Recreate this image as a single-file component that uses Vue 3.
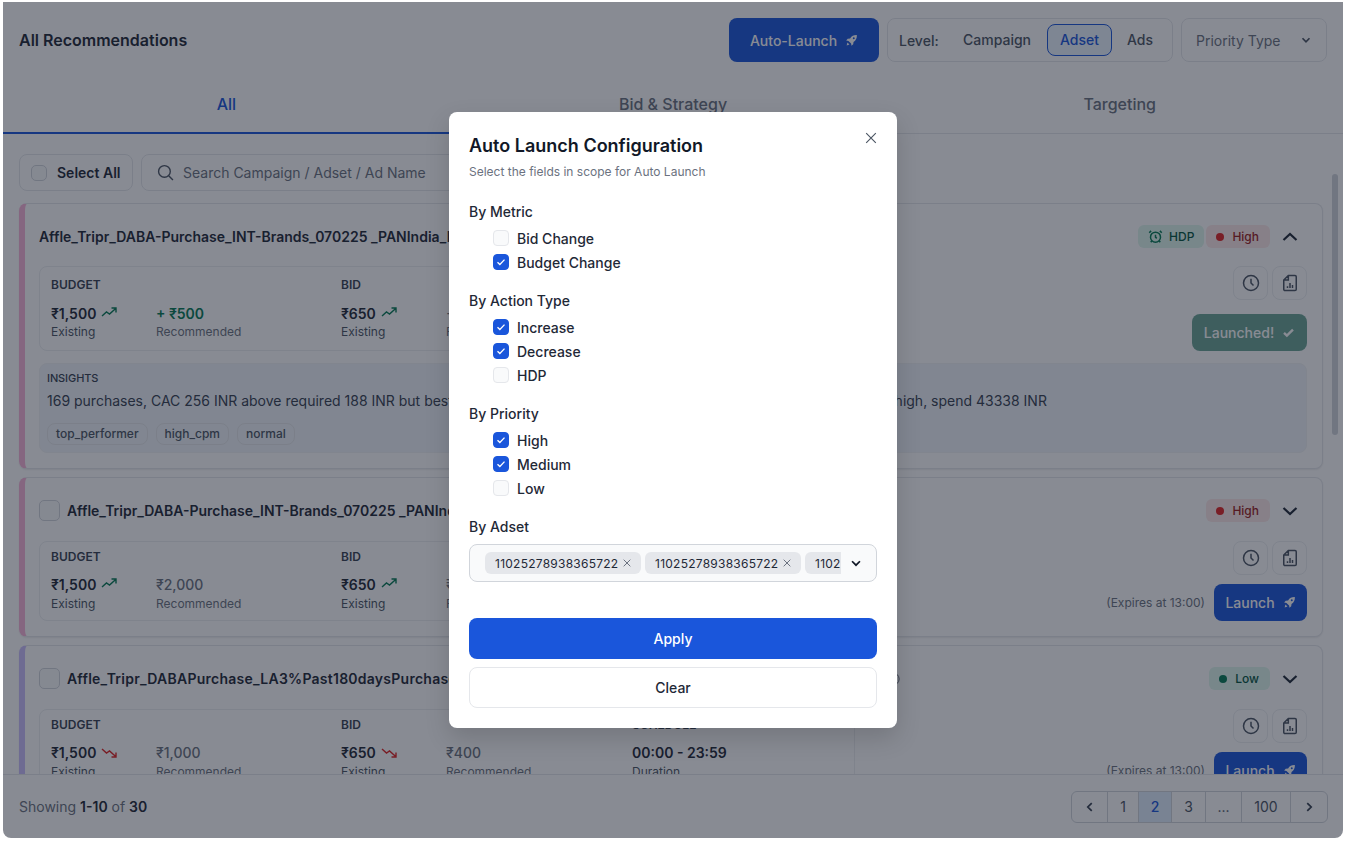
<template>
  <div class="page">
    <div class="panel">
      <header class="top">
        <h1 class="top__title">All Recommendations</h1>
        <div class="top__actions">
          <button class="btn btn-primary top__auto">
            Auto-Launch
            <svg class="rocket" viewBox="0 0 16 16"><path fill-rule="evenodd" d="M14.600 1.400c-3.600-.2-6.300 1.100-8.300 4.100l-3 .4L1.400 8l2.800.5 3.300 3.300.5 2.800 2.100-1.900.4-3c3-2 4.300-4.700 4.100-8.300zM10.800 4a1.200 1.200 0 1 1 0 2.400 1.200 1.200 0 0 1 0-2.400zM3 10.500l2.500 2.500-3.500 1z"/></svg>
          </button>
          <div class="level">
            <span class="level__label">Level:</span>
            <span class="level__item">Campaign</span>
            <span class="level__item level__item--active">Adset</span>
            <span class="level__item">Ads</span>
          </div>
          <div class="priority">
            Priority Type
            <svg class="priority__chevron" viewBox="0 0 16 16"><path d="M4 6l4 4 4-4"/></svg>
          </div>
        </div>
      </header>

      <nav class="tabs">
        <div v-for="(tab, i) in tabs" :key="tab" class="tabs__item" :class="{ 'tabs__item--active': i === 0 }">{{ tab }}</div>
      </nav>

      <main class="list">
        <div class="toolbar">
          <label class="toolbar__all"><span class="box"></span>Select All</label>
          <div class="toolbar__search">
            <svg viewBox="0 0 16 16"><circle cx="7" cy="7" r="5.500"/><path d="M11 11l4 4"/></svg>
            Search Campaign / Adset / Ad Name
          </div>
        </div>

        <article
          v-for="card in cards"
          :key="card.id"
          class="card"
          :class="'card--' + card.accent"
        >
          <div class="card__head">
            <span v-if="card.selectable" class="box box--lg"></span>
            <span class="card__name" :style="{ width: card.nameWidth + 'px' }">{{ card.name }}</span>
            <svg v-if="card.info" class="card__info" viewBox="0 0 16 16"><circle cx="8" cy="8" r="7"/></svg>
            <div class="card__badges">
              <span v-if="card.hdp" class="badge badge--green badge--hdp">
                <svg class="alarm" viewBox="0 0 24 24"><circle cx="12" cy="13" r="8"/><path d="M12 9v4l2 2M5 3L2 6M19 3l3 3M6.300 19l-2 2M17.700 19l2 2"/></svg>
                HDP
              </span>
              <span class="badge" :class="card.priority === 'Low' ? 'badge--green' : 'badge--red'">
                <i class="badge__dot"></i>{{ card.priority }}
              </span>
              <svg class="card__toggle" viewBox="0 0 16 16"><path :d="card.open ? 'M1.500 11l6.500-6 6.500 6' : 'M1.500 5l6.500 6 6.500-6'"/></svg>
            </div>
          </div>

          <div class="card__row" :class="{ 'card__row--open': card.open }">
            <div class="metrics">
              <div class="metric">
                <div class="metric__label">BUDGET</div>
                <div class="metric__pair">
                  <div>
                    <div class="metric__value">
                      ₹1,500
                      <svg class="trend" :class="card.up ? 'trend--up' : 'trend--down'" viewBox="0 0 16 10"><path :d="card.up ? 'M1 9l4.500-4 3 2L15 1.200M10.500 1H15v4.500' : 'M1 1l4.500 4 3-2L15 8.800M10.500 9H15V4.500'"/></svg>
                    </div>
                    <div class="metric__sub">Existing</div>
                  </div>
                  <div>
                    <div class="metric__value metric__value--rec" :class="{ 'metric__value--delta': card.open }">{{ card.budgetRec }}</div>
                    <div class="metric__sub metric__sub--rec">Recommended</div>
                  </div>
                </div>
              </div>
              <div class="metric">
                <div class="metric__label">BID</div>
                <div class="metric__pair">
                  <div>
                    <div class="metric__value">
                      ₹650
                      <svg class="trend" :class="card.up ? 'trend--up' : 'trend--down'" viewBox="0 0 16 10"><path :d="card.up ? 'M1 9l4.500-4 3 2L15 1.200M10.500 1H15v4.500' : 'M1 1l4.500 4 3-2L15 8.800M10.500 9H15V4.500'"/></svg>
                    </div>
                    <div class="metric__sub">Existing</div>
                  </div>
                  <div>
                    <div class="metric__value metric__value--rec">{{ card.bidRec }}</div>
                    <div class="metric__sub metric__sub--rec">Recommended</div>
                  </div>
                </div>
              </div>
              <div class="metric">
                <div class="metric__label">SCHEDULE</div>
                <div class="metric__value">00:00 - 23:59</div>
                <div class="metric__sub">Duration</div>
              </div>
            </div>

            <div class="card__side">
              <div class="card__icons">
                <button class="icon-btn">
                  <svg viewBox="0 0 24 24"><circle cx="12" cy="12" r="9"/><path d="M12 7v5l3 3"/></svg>
                </button>
                <button class="icon-btn">
                  <svg viewBox="0 0 24 24"><path d="M10 3h8a1.500 1.500 0 0 1 1.500 1.500v15A1.500 1.500 0 0 1 18 21H6a1.500 1.500 0 0 1-1.500-1.500V8.500zM10 3v5.500H4.500M9 18v-2M12 18v-6M15 18v-3.500"/></svg>
                </button>
              </div>
              <div v-if="card.open" class="btn btn-done">
                Launched!
                <svg viewBox="0 0 16 16"><path d="M2.500 8.500l3.500 3.300L13.500 4.500"/></svg>
              </div>
              <div v-else class="card__launch">
                <span class="card__expires">(Expires at 13:00)</span>
                <button class="btn btn-primary btn-launch">
                  Launch
                  <svg class="rocket" viewBox="0 0 16 16"><path fill-rule="evenodd" d="M14.600 1.400c-3.600-.2-6.300 1.100-8.300 4.100l-3 .4L1.400 8l2.800.5 3.300 3.300.5 2.800 2.100-1.900.4-3c3-2 4.300-4.700 4.100-8.300zM10.800 4a1.200 1.200 0 1 1 0 2.400 1.200 1.200 0 0 1 0-2.400zM3 10.500l2.500 2.500-3.500 1z"/></svg>
                </button>
              </div>
            </div>
          </div>

          <div v-if="card.open" class="insights">
            <div class="insights__label">INSIGHTS</div>
            <p class="insights__text">169 purchases, CAC 256 INR above required 188 INR but best performer among all adsets in the campaign with delivery, CPM is high, spend 43338 INR</p>
            <div class="insights__tags">
              <span v-for="tag in insightTags" :key="tag" class="insights__tag">{{ tag }}</span>
            </div>
          </div>
        </article>

        <div class="scrollbar"></div>
      </main>

      <footer class="foot">
        <div class="foot__count">Showing <b>1-10</b> of <b>30</b></div>
        <div class="pager">
          <span class="pager__item pager__item--prev"><svg viewBox="0 0 16 16"><path d="M10 3.500L5.500 8l4.500 4.500"/></svg></span>
          <span
            v-for="p in pages"
            :key="p.label"
            class="pager__item"
            :class="{ 'pager__item--active': p.label === '2' }"
            :style="{ width: p.width + 'px' }"
          >{{ p.label }}</span>
          <span class="pager__item pager__item--next"><svg viewBox="0 0 16 16"><path d="M6 3.500L10.500 8 6 12.500"/></svg></span>
        </div>
      </footer>

      <div class="overlay">
        <div class="modal">
          <svg class="modal__close" viewBox="0 0 16 16"><path d="M2.500 2.500l11 11M13.500 2.500l-11 11"/></svg>
          <h2 class="modal__title">Auto Launch Configuration</h2>
          <p class="modal__sub">Select the fields in scope for Auto Launch</p>

          <section v-for="group in groups" :key="group.title" class="group">
            <div class="group__title">{{ group.title }}</div>
            <label v-for="opt in group.options" :key="opt.label" class="group__option">
              <span class="check" :class="{ 'check--on': opt.on }">
                <svg v-if="opt.on" viewBox="0 0 16 16"><path d="M4 8.200l2.700 2.700L12 5.300"/></svg>
              </span>
              {{ opt.label }}
            </label>
          </section>

          <div class="group__title group__title--adset">By Adset</div>
          <div class="adset">
            <div class="adset__chips">
              <span v-for="n in 3" :key="n" class="chip">
                11025278938365722
                <svg viewBox="0 0 12 12"><path d="M2 2l8 8M10 2l-8 8"/></svg>
              </span>
            </div>
            <svg class="adset__chevron" viewBox="0 0 16 16"><path d="M3.500 6l4.500 4.500L12.500 6"/></svg>
          </div>

          <button class="modal__apply">Apply</button>
          <button class="modal__clear">Clear</button>
        </div>
      </div>
    </div>
  </div>
</template>

<script setup>
const tabs = ['All', 'Bid & Strategy', 'Targeting']

const insightTags = ['top_performer', 'high_cpm', 'normal']

const cards = [
  {
    id: 1,
    accent: 'pink',
    name: 'Affle_Tripr_DABA-Purchase_INT-Brands_070225 _PANIndia_Broad_Adset',
    nameWidth: 600,
    hdp: true,
    priority: 'High',
    open: true,
    up: true,
    budgetRec: '+ ₹500',
    bidRec: '+ ₹150'
  },
  {
    id: 2,
    accent: 'pink',
    name: 'Affle_Tripr_DABA-Purchase_INT-Brands_070225 _PANIndia_Broad_Adset',
    nameWidth: 600,
    selectable: true,
    priority: 'High',
    up: true,
    budgetRec: '₹2,000',
    bidRec: '₹800'
  },
  {
    id: 3,
    accent: 'purple',
    name: 'Affle_Tripr_DABAPurchase_LA3%Past180daysPurchase_INT-Brands_070225_PANIndia_Broad',
    nameWidth: 818,
    selectable: true,
    info: true,
    priority: 'Low',
    up: false,
    budgetRec: '₹1,000',
    bidRec: '₹400'
  }
]

const pages = [
  { label: '1', width: 31 },
  { label: '2', width: 33 },
  { label: '3', width: 34 },
  { label: '...', width: 36 },
  { label: '100', width: 49 }
]

const groups = [
  {
    title: 'By Metric',
    options: [
      { label: 'Bid Change', on: false },
      { label: 'Budget Change', on: true }
    ]
  },
  {
    title: 'By Action Type',
    options: [
      { label: 'Increase', on: true },
      { label: 'Decrease', on: true },
      { label: 'HDP', on: false }
    ]
  },
  {
    title: 'By Priority',
    options: [
      { label: 'High', on: true },
      { label: 'Medium', on: true },
      { label: 'Low', on: false }
    ]
  }
]
</script>

<style>
html,
body {
  margin: 0;
  background: #fff;
  overflow: hidden;
}
</style>

<style scoped>
* {
  box-sizing: border-box;
}

.page {
  width: 1346px;
  height: 842px;
  padding: 2px 3px 4px;
  font-family: Inter, "Liberation Sans", sans-serif;
  color: #1f2937;
}

.panel {
  position: relative;
  height: 836px;
  display: flex;
  flex-direction: column;
  background: #fff;
  border-radius: 0 0 8px 8px;
  overflow: hidden;
}

.top {
  display: flex;
  align-items: center;
  justify-content: space-between;
  padding: 16px 16px 14px;
}

.top__title {
  margin: 0;
  font-size: 16px;
  font-weight: 600;
  color: #1f2937;
}

.top__actions {
  display: flex;
  gap: 8px;
}

.btn {
  display: flex;
  align-items: center;
  justify-content: center;
  border: none;
  border-radius: 8px;
  font-family: inherit;
  font-size: 14px;
  font-weight: 500;
}

.btn-primary {
  background: #1a56db;
  color: #fff;
}

.top__auto {
  width: 150px;
  height: 44px;
  gap: 8px;
}

.rocket {
  width: 13px;
  height: 13px;
  fill: #fff;
}

.level {
  display: flex;
  align-items: center;
  width: 286px;
  height: 44px;
  padding: 0 11px;
  border: 1px solid #e5e7eb;
  border-radius: 8px;
  font-size: 14px;
  font-weight: 500;
  color: #4b5563;
}

.level__label {
  width: 51px;
  flex: none;
}

.level__item {
  padding: 0 12px;
  height: 32px;
  line-height: 30px;
  border: 1px solid transparent;
  border-radius: 8px;
}

.level__item--active {
  margin: 0 2px 0 3px;
  border-color: #1a56db;
  color: #1a56db;
  background: #ebf5ff;
}

.priority {
  display: flex;
  align-items: center;
  justify-content: space-between;
  width: 146px;
  height: 44px;
  padding: 0 13px 0 14px;
  border: 1px solid #e5e7eb;
  border-radius: 8px;
  font-size: 14px;
  color: #6b7280;
}

.priority__chevron {
  width: 14px;
  height: 14px;
  fill: none;
  stroke: #4b5563;
  stroke-width: 2;
}

.tabs {
  display: flex;
  height: 58px;
}

.tabs__item {
  flex: 1;
  display: flex;
  align-items: center;
  justify-content: center;
  padding-bottom: 1px;
  font-size: 16px;
  font-weight: 500;
  color: #6b7280;
  border-bottom: 1px solid #e5e7eb;
}

.tabs__item--active {
  padding-bottom: 0;
  color: #1a56db;
  border-bottom: 2px solid #1a56db;
}

.list {
  position: relative;
  flex: 1;
  min-height: 0;
  overflow: hidden;
  padding: 20px 20px 0 16px;
  display: flex;
  flex-direction: column;
  gap: 8px;
}

.toolbar {
  display: flex;
  gap: 8px;
  height: 37px;
  flex: none;
  margin-bottom: 4px;
  font-size: 14px;
}

.toolbar__all {
  display: flex;
  align-items: center;
  gap: 10px;
  width: 114px;
  padding-left: 11px;
  border: 1px solid #e5e7eb;
  border-radius: 8px;
  font-weight: 600;
  color: #1f2937;
}

.toolbar__search {
  display: flex;
  align-items: center;
  gap: 9px;
  width: 420px;
  padding-left: 15px;
  border: 1px solid #e5e7eb;
  border-radius: 8px;
  color: #6b7280;
}

.toolbar__search svg {
  width: 17px;
  height: 17px;
  fill: none;
  stroke: #4b5563;
  stroke-width: 1.300;
}

.box {
  display: block;
  width: 16px;
  height: 16px;
  flex: none;
  background: #f9fafb;
  border: 1px solid #d1d5db;
  border-radius: 5px;
}

.box--lg {
  width: 21px;
  height: 21px;
  margin-right: 7px;
}

.card {
  flex: none;
  padding: 19px 15px 15px 14px;
  background: #fff;
  border: 1px solid #e5e7eb;
  border-left: 6px solid #f8b4d9;
  border-radius: 8px;
  box-shadow: 0 1px 2px rgba(0, 0, 0, 0.08);
}

.card--purple {
  border-left-color: #cabffd;
}

.card--purple .card__name {
  letter-spacing: 0.25px;
}

.card__head {
  display: flex;
  align-items: center;
  height: 27px;
}

.card__name {
  font-size: 14px;
  font-weight: 600;
  color: #1f2937;
  white-space: nowrap;
  overflow: hidden;
}

.card__info {
  width: 14px;
  height: 14px;
  margin-left: 1px;
  fill: none;
  stroke: #4b5563;
}

.card__badges {
  margin-left: auto;
  display: flex;
  align-items: center;
  gap: 2px;
}

.badge {
  display: flex;
  align-items: center;
  height: 23px;
  padding: 0 11px 0 10px;
  border-radius: 6px;
  font-size: 12px;
  font-weight: 500;
}

.badge--hdp {
  gap: 6px;
  padding: 0 10px;
}

.badge--green {
  background: #def7ec;
  color: #03543f;
}

.badge--red {
  background: #fde8e8;
  color: #9b1c1c;
}

.badge__dot {
  width: 8px;
  height: 8px;
  margin-right: 8px;
  border-radius: 50%;
}

.badge--red .badge__dot {
  background: #e02424;
}

.badge--green .badge__dot {
  background: #057a55;
}

.alarm {
  width: 15px;
  height: 15px;
  fill: none;
  stroke: #057a55;
  stroke-width: 2.400;
}

.card__toggle {
  width: 16px;
  height: 16px;
  margin: 0 9px 0 10px;
  fill: none;
  stroke: #1f2937;
  stroke-width: 2.200;
}

.card__row {
  display: flex;
  justify-content: space-between;
  height: 80px;
  margin-top: 17px;
}

.card__row--open {
  height: 85px;
  margin-top: 16px;
}

.metrics {
  display: grid;
  grid-template-columns: 290px 291px 1fr;
  align-items: center;
  width: 816px;
  padding: 0 11px 2px;
  border: 1px solid #eceef1;
  border-radius: 8px;
}

.card__row--open .metrics {
  padding-bottom: 0;
}

.metric__label {
  margin-bottom: 10px;
  font-size: 12px;
  line-height: 16px;
  font-weight: 600;
  color: #374151;
}

.metric__pair {
  display: grid;
  grid-template-columns: 105px 1fr;
}

.metric__value {
  display: flex;
  align-items: center;
  gap: 5px;
  height: 20px;
  margin-bottom: 1px;
  font-size: 14px;
  font-weight: 600;
  color: #1f2937;
  white-space: nowrap;
}

.metric__value--rec {
  font-weight: 500;
  color: #6b7280;
}

.metric__value--delta {
  font-weight: 600;
  color: #057a55;
}

.metric__sub {
  font-size: 12px;
  line-height: 16px;
  color: #4b5563;
}

.metric__sub--rec {
  color: #6b7280;
}

.trend {
  width: 16px;
  height: 10px;
  margin-top: -3px;
  fill: none;
  stroke-width: 1.400;
}

.trend--up {
  stroke: #057a55;
}

.trend--down {
  stroke: #e02424;
  margin-top: 0;
}

.card__side {
  display: flex;
  flex-direction: column;
  align-items: flex-end;
  justify-content: space-between;
}

.card__icons {
  display: flex;
  gap: 4px;
}

.icon-btn {
  display: flex;
  align-items: center;
  justify-content: center;
  width: 35px;
  height: 34px;
  padding: 0;
  background: #fff;
  border: 1px solid #eceef1;
  border-radius: 8px;
}

.icon-btn svg {
  width: 20px;
  height: 20px;
  fill: none;
  stroke: #4b5563;
  stroke-width: 1.800;
}

.btn-done {
  width: 115px;
  height: 37px;
  gap: 8px;
  background: #6ba595;
  color: #fff;
}

.btn-done svg {
  width: 13px;
  height: 13px;
  fill: none;
  stroke: #fff;
  stroke-width: 3;
}

.card__launch {
  display: flex;
  align-items: center;
  gap: 9px;
}

.card__expires {
  font-size: 12px;
  color: #6b7280;
}

.btn-launch {
  width: 93px;
  height: 37px;
  gap: 8px;
}

.insights {
  margin-top: 12px;
  height: 90px;
  padding: 7px;
  background: #f0f5fa;
  border: 1px solid #f0f2f5;
  border-radius: 8px;
}

.insights__label {
  font-size: 11px;
  line-height: 14px;
  font-weight: 500;
  letter-spacing: -0.1px;
  color: #374151;
}

.insights__text {
  margin: 6px 0 0;
  font-size: 14px;
  line-height: 20px;
  white-space: nowrap;
  color: #374151;
}

.insights__tags {
  display: flex;
  gap: 8px;
  margin-top: 12px;
}

.insights__tag {
  height: 22px;
  padding: 0 8px;
  line-height: 20px;
  font-size: 12px;
  font-weight: 500;
  color: #4b5563;
  border: 1px solid #e5e7eb;
  border-radius: 8px;
}

.scrollbar {
  position: absolute;
  top: 40px;
  right: 5px;
  width: 6px;
  height: 261px;
  background: #d1d5db;
  border-radius: 3px;
}

.foot {
  display: flex;
  align-items: center;
  justify-content: space-between;
  height: 64px;
  flex: none;
  padding: 0 15px 0 16px;
  background: #fff;
  border-top: 1px solid #e5e7eb;
  font-size: 14px;
  color: #6b7280;
}

.foot__count b {
  font-weight: 600;
  color: #1f2937;
}

.pager {
  display: flex;
  height: 32px;
  border: 1px solid #d1d5db;
  border-radius: 6px;
  overflow: hidden;
}

.pager__item {
  display: flex;
  align-items: center;
  justify-content: center;
  border-left: 1px solid #d1d5db;
  color: #4b5563;
}

.pager__item--prev {
  width: 35px;
  border-left: none;
}

.pager__item--next {
  width: 37px;
}

.pager__item svg {
  width: 14px;
  height: 14px;
  fill: none;
  stroke: #374151;
  stroke-width: 2;
}

.pager__item--active {
  background: #e1effe;
  color: #1a56db;
  font-weight: 500;
}

.overlay {
  position: absolute;
  inset: 0;
  display: flex;
  align-items: center;
  justify-content: center;
  background: rgba(17, 24, 39, 0.5);
}

.modal {
  position: relative;
  width: 448px;
  height: 616px;
  padding: 20px;
  background: #fff;
  border-radius: 8px;
  box-shadow: 0 10px 25px rgba(0, 0, 0, 0.15);
}

.modal__close {
  position: absolute;
  top: 19px;
  right: 19px;
  width: 14px;
  height: 14px;
  fill: none;
  stroke: #4b5563;
  stroke-width: 1.300;
}

.modal__title {
  margin: 0;
  font-size: 18px;
  line-height: 28px;
  font-weight: 600;
  color: #111827;
}

.modal__sub {
  margin: 4px 0 22px;
  font-size: 12px;
  line-height: 16px;
  color: #6b7280;
}

.group {
  margin-bottom: 17px;
}

.group__title {
  margin-bottom: 4px;
  font-size: 14px;
  line-height: 20px;
  font-weight: 500;
  color: #1f2937;
}

.group__title--adset {
  margin-bottom: 7px;
}

.group__option {
  display: flex;
  align-items: center;
  gap: 8px;
  height: 24px;
  padding-left: 24px;
  font-size: 14px;
  font-weight: 500;
  color: #1f2937;
}

.check {
  display: flex;
  width: 16px;
  height: 16px;
  background: #f9fafb;
  border: 1px solid #e5e7eb;
  border-radius: 4px;
}

.check--on {
  background: #1a56db;
  border-color: #1a56db;
}

.check svg {
  width: 14px;
  height: 14px;
  fill: none;
  stroke: #fff;
  stroke-width: 1.500;
}

.adset {
  display: flex;
  align-items: center;
  height: 38px;
  padding: 0 13px 0 15px;
  background: #f9fafb;
  border: 1px solid #d1d5db;
  border-radius: 8px;
}

.adset__chips {
  display: flex;
  gap: 4px;
  width: 356px;
  overflow: hidden;
}

.chip {
  flex: none;
  display: flex;
  align-items: center;
  gap: 4px;
  width: 156px;
  height: 22px;
  padding-left: 10px;
  background: #e5e7eb;
  border-radius: 6px;
  font-size: 12px;
  letter-spacing: 0.25px;
  color: #1f2937;
  white-space: nowrap;
}

.chip svg {
  width: 10px;
  height: 10px;
  fill: none;
  stroke: #6b7280;
  stroke-width: 1.200;
}

.adset__chevron {
  width: 14px;
  height: 14px;
  margin-left: auto;
  fill: none;
  stroke: #111827;
  stroke-width: 2;
}

.modal__apply,
.modal__clear {
  display: block;
  width: 100%;
  height: 41px;
  font-family: inherit;
  font-size: 14px;
  font-weight: 500;
  border-radius: 8px;
}

.modal__apply {
  margin-top: 36px;
  background: #1a56db;
  border: none;
  color: #fff;
}

.modal__clear {
  margin-top: 8px;
  background: #fff;
  border: 1px solid #e5e7eb;
  color: #1f2937;
}
</style>
